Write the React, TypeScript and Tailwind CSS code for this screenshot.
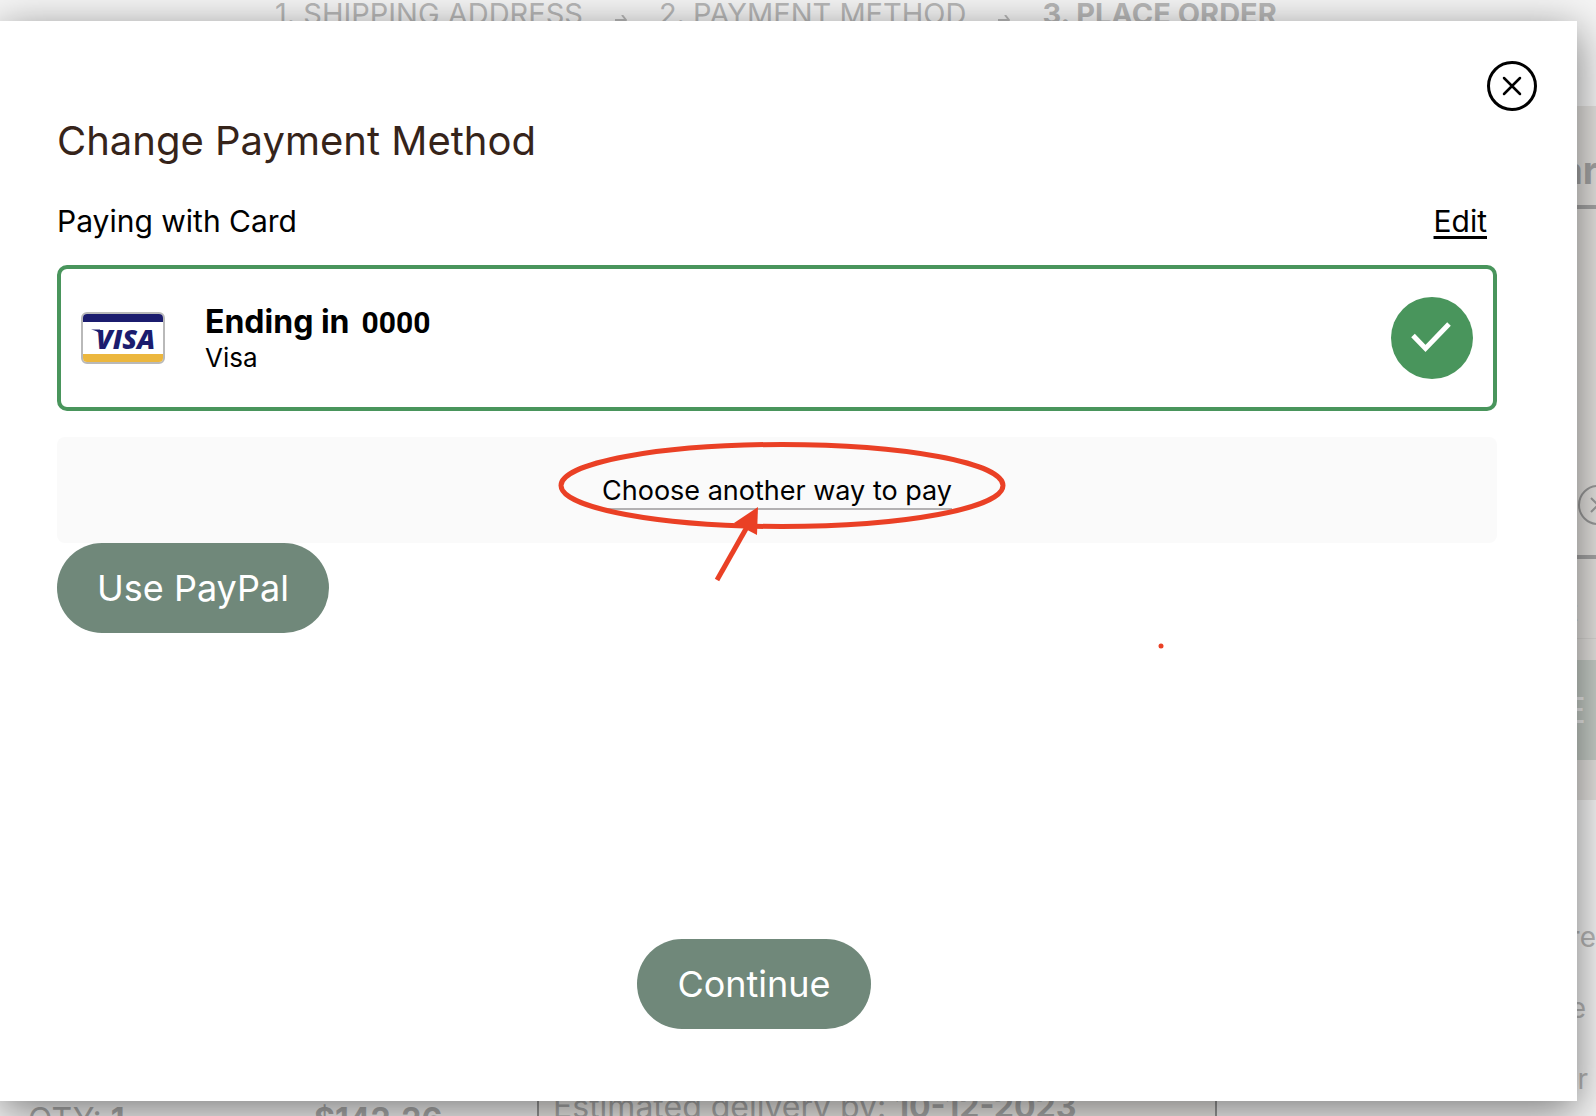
import { useState } from "react";

// a saved card that can be used for the order
interface Card {
  id: number;
  brand: string;
  lastFour: string;
}

const steps = [
  { id: 1, label: "1. SHIPPING ADDRESS" },
  { id: 2, label: "2. PAYMENT METHOD" },
  { id: 3, label: "3. PLACE ORDER" },
];

const cards: Card[] = [{ id: 1, brand: "Visa", lastFour: "0000" }];

const StepArrow = () => (
  <svg className="mx-8 mt-[15px] h-3 w-3 shrink-0" viewBox="0 0 12 12" fill="none" stroke="currentColor" strokeWidth="2">
    <path d="M0 5h11M7 0l4 5-4 5" />
  </svg>
);

const VisaIcon = () => (
  <svg className="h-[52px] w-[84px] shrink-0" viewBox="0 0 84 52" role="img" aria-label="Visa">
    <rect x="1" y="1" width="82" height="50" rx="5" fill="#fff" stroke="#b9b9b9" strokeWidth="2" />
    <path d="M2 10V6a4 4 0 0 1 4-4h72a4 4 0 0 1 4 4v4z" fill="#1b1c6e" />
    <path d="M2 42v4a4 4 0 0 0 4 4h72a4 4 0 0 0 4-4v-4z" fill="#ecb73e" />
    <path d="M10 17.500h9l1 5q-4-4-10-5z" fill="#1b1c6e" />
    <text
      x="15"
      y="37"
      fontFamily="Open Sans, sans-serif"
      fontSize="27"
      fontWeight="800"
      fontStyle="italic"
      fill="#1b1c6e"
    >
      VISA
    </text>
  </svg>
);

// checkout page that stays visible around the dialog
const CheckoutPage = () => (
  <div className="flex min-h-screen flex-col text-[#b8b8b8]" aria-hidden="true">
    <ol className="flex h-[106px] items-start pl-[275px] text-[29px] leading-7">
      {steps.map((step, i) => (
        <li key={step.id} className={i === 2 ? "flex font-bold" : "flex"}>
          <span className="whitespace-nowrap">{step.label}</span>
          {i < 2 && <StepArrow />}
        </li>
      ))}
    </ol>
    <div className="flex flex-1">
      <main className="flex flex-1 flex-col justify-end">
        <div className="flex h-[26px] items-start overflow-hidden text-[32px] leading-9 text-[#adadad]">
          <p className="w-[286px] shrink-0 pt-3 pl-7">
            QTY: <b>1</b>
          </p>
          <p className="w-[251px] shrink-0 pt-3 pl-7 font-bold">$142.26</p>
          <p className="h-full w-[680px] shrink-0 border-x-2 border-[#999] bg-[#efedea] pl-[14px] leading-[34px] whitespace-nowrap">
            Estimated delivery by: <b>10-12-2023</b>
          </p>
        </div>
      </main>
      <aside className="w-[280px] shrink-0 overflow-hidden">
        <div className="h-[694px] bg-[#e4e2df]">
          <h2 className="h-[103px] border-b-4 border-[#a5a5a5] pt-[46px] pl-3 text-[38px] leading-9 font-bold whitespace-nowrap text-[#a5a5a5]">
            Order Summary
          </h2>
          <div className="flex h-[350px] items-end justify-end border-b-4 border-[#a5a5a5] pb-[30px]">
            <svg className="-mr-[22px] h-10 w-10" viewBox="0 0 40 40" fill="none" stroke="#9b9b9b" strokeWidth="2">
              <circle cx="20" cy="20" r="19" />
              <path d="M13 13l14 14M27 13L13 27" />
            </svg>
          </div>
          <p className="h-20 border-b border-[#d8d6d3] pt-[34px] pr-[18px] text-right text-[28px] leading-9">t</p>
          <div className="mt-[21px] flex h-[100px] items-center justify-end bg-[#c6cdc7] pr-[10px] text-4xl text-[#ececec]">
            PLACE
          </div>
        </div>
        <div className="pt-[102px] text-right text-[28px] leading-[71px]">
          <p>re</p>
          <p className="pr-[10px]">e</p>
          <p className="pr-2">r</p>
        </div>
      </aside>
    </div>
  </div>
);

const CardOption = ({ card }: { card: Card }) => (
  <div className="mt-6 flex h-[146px] items-center rounded-[10px] border-4 border-[#49955c] px-5">
    <VisaIcon />
    <div className="ml-10 flex-1">
      <p className="pt-px text-[32px] leading-[38px] font-bold">
        Ending in<span className="ml-3 font-['Roboto',sans-serif] text-[30px]">{card.lastFour}</span>
      </p>
      <p className="text-[26px] leading-8">{card.brand}</p>
    </div>
    <svg className="h-[82px] w-[82px] shrink-0" viewBox="0 0 82 82" fill="none">
      <circle cx="41" cy="41" r="41" fill="#49955c" />
      <path d="M22 38.500L34.500 51.500L58 27" stroke="#fff" strokeWidth="5" />
    </svg>
  </div>
);

// red ellipse and arrow pointing at the link
const Markup = () => (
  <svg
    className="pointer-events-none absolute top-0 left-1/2 h-[220px] w-[840px] -translate-x-1/2 overflow-visible"
    viewBox="357 437 840 220"
    fill="none"
    stroke="#ea4025"
    strokeWidth="5"
  >
    <ellipse cx="782" cy="485.500" rx="221" ry="41" />
    <path d="M717 580L747 527" />
    <path d="M758 507L734 523L757 535Z" fill="#ea4025" stroke="none" />
    <circle cx="1161" cy="646" r="2.500" fill="#ea4025" stroke="none" />
  </svg>
);

const pill = "h-[90px] rounded-full bg-[#70887a] px-10 text-4xl text-white";

const App = () => {
  const [open, setOpen] = useState(true);

  return (
    <div className="relative min-h-screen overflow-hidden bg-[#f5f5f5] font-['Inter',sans-serif]">
      <CheckoutPage />
      {open && (
        <div
          role="dialog"
          aria-labelledby="dialog-title"
          className="absolute top-[21px] right-[19px] bottom-[15px] left-0 flex flex-col bg-white pr-20 pl-[57px] text-black shadow-[0_10px_40px_rgba(0,0,0,0.5)]"
        >
          <button
            aria-label="Close"
            onClick={() => setOpen(false)}
            className="mt-10 -mr-10 flex h-[50px] w-[50px] items-center justify-center self-end rounded-full border-3 border-black"
          >
            <svg className="h-5 w-5" viewBox="0 0 20 20" fill="none" stroke="currentColor" strokeWidth="2.500" strokeLinecap="round">
              <path d="M2 2l16 16M18 2L2 18" />
            </svg>
          </button>
          <h1 id="dialog-title" className="mt-[5px] text-[40px] leading-[50px] text-[#36241a]">
            Change Payment Method
          </h1>
          <div className="mt-[35px] flex items-center justify-between pr-[10px] text-[30px] leading-10">
            <h2>Paying with Card</h2>
            <a href="#edit" className="underline decoration-3 underline-offset-4">
              Edit
            </a>
          </div>
          {cards.map((card) => (
            <CardOption key={card.id} card={card} />
          ))}
          <div className="relative mt-[26px] flex h-[106px] items-center justify-center rounded-lg bg-[#fafafa] pt-[3px]">
            <button className="border-b-2 border-[#b3b1b2] text-[27px] leading-[34px]">Choose another way to pay</button>
            <Markup />
          </div>
          <button className={`${pill} self-start`}>Use PayPal</button>
          <div className="mt-auto mb-[72px] flex justify-center pr-[46px]">
            <button className={pill}>Continue</button>
          </div>
        </div>
      )}
    </div>
  );
};

export default App;
